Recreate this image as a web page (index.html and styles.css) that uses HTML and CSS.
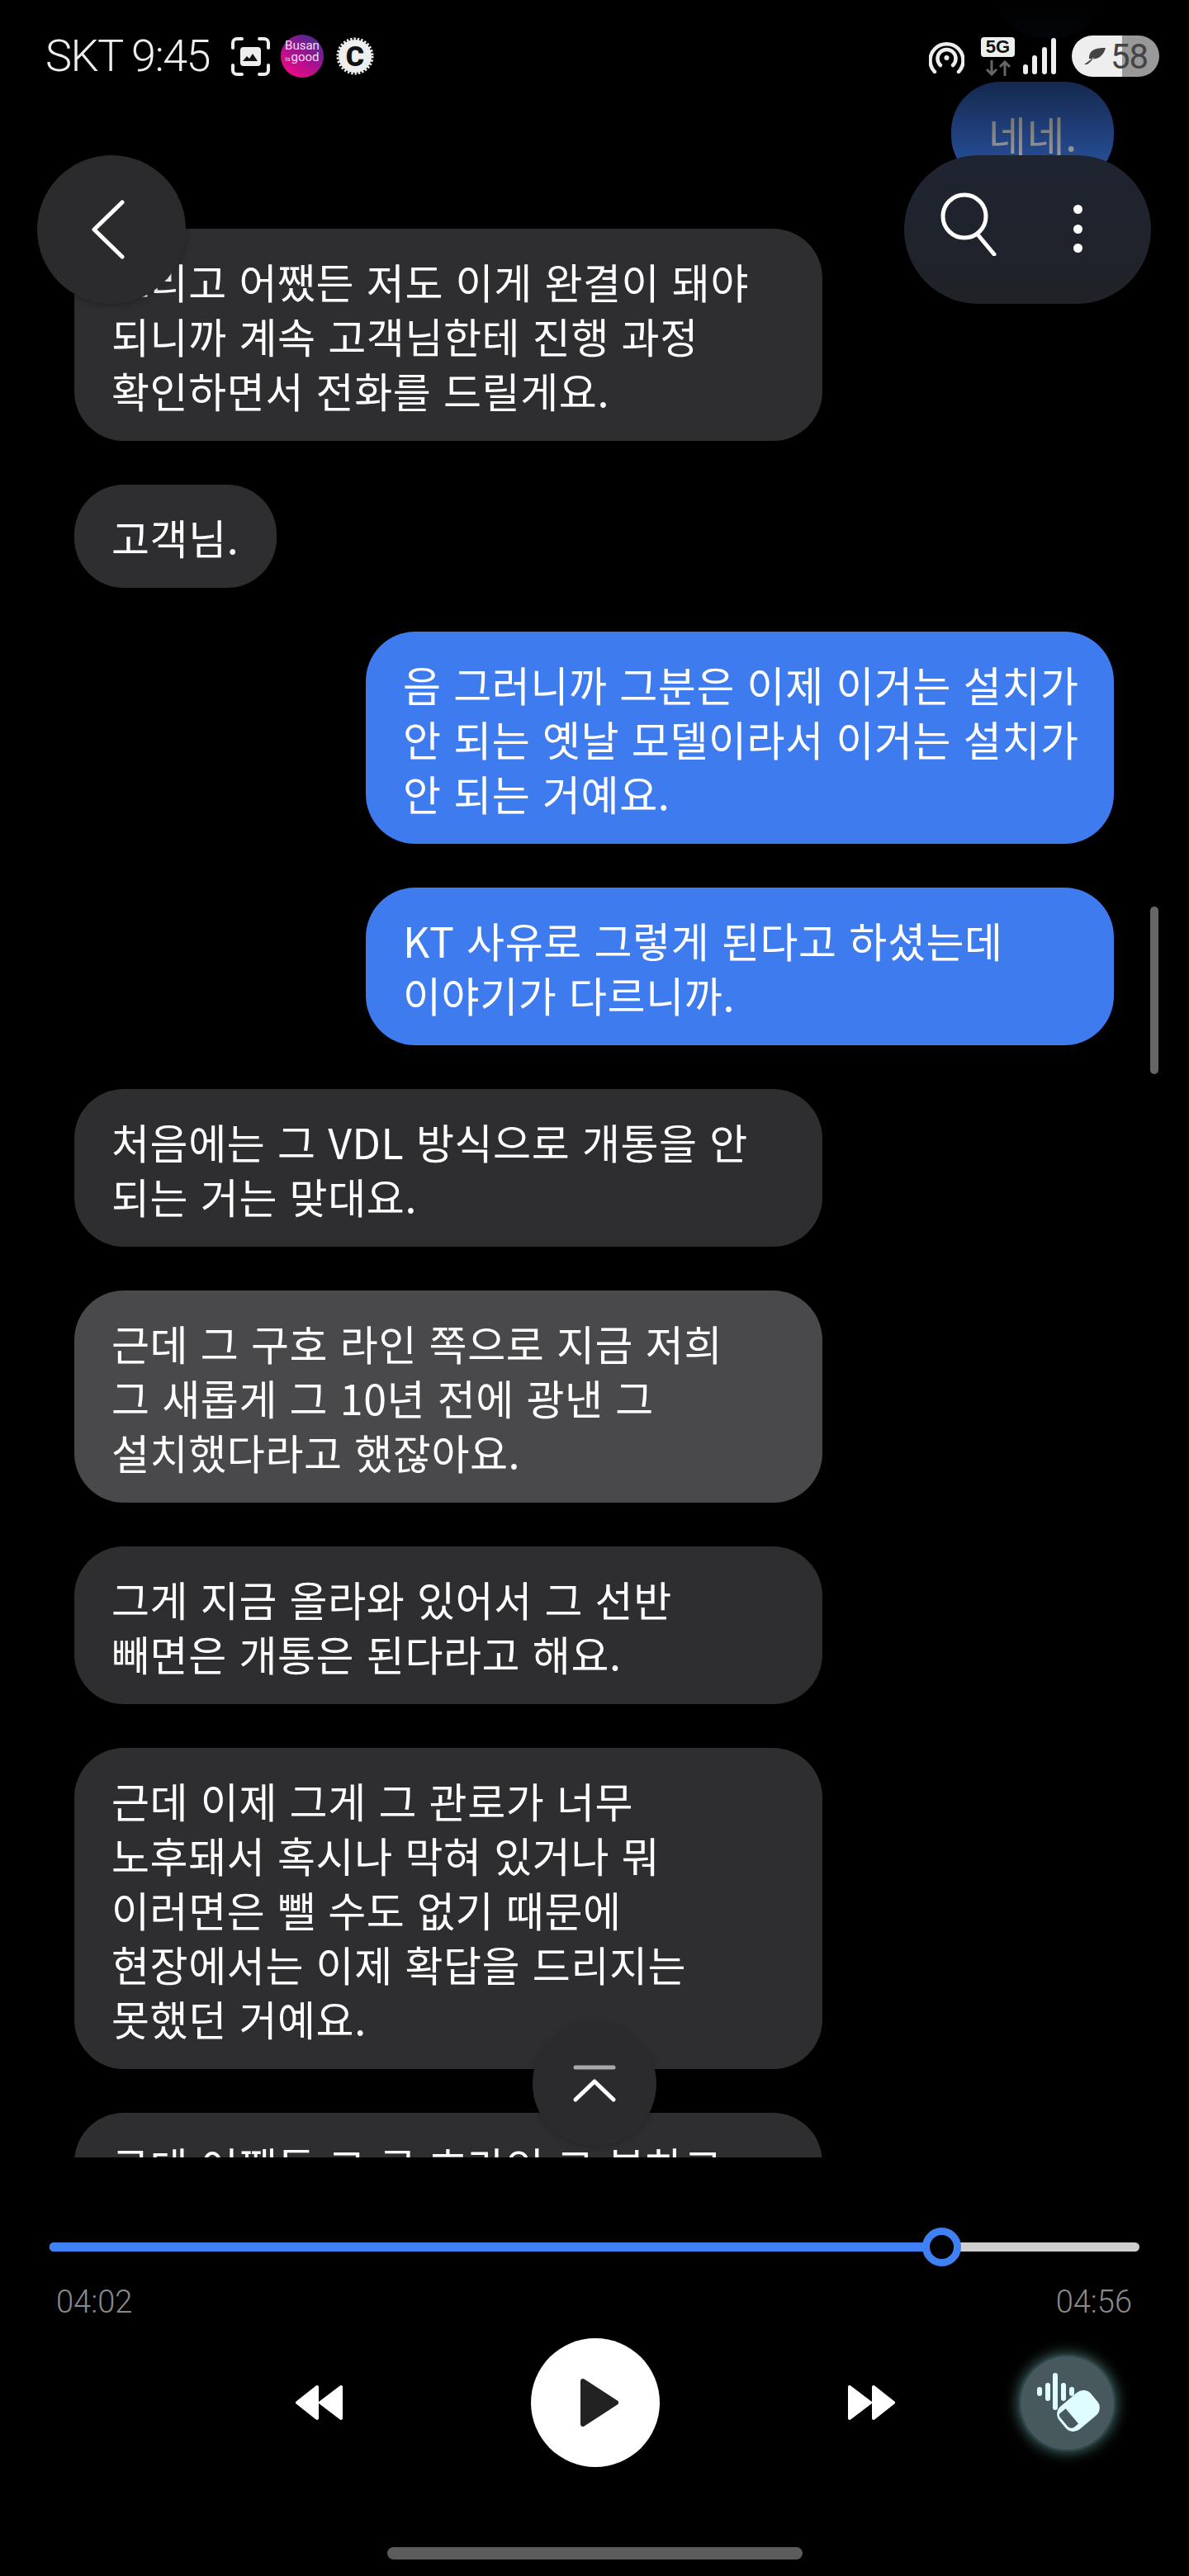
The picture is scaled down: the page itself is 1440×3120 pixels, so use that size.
FILE: index.html
```html
<!DOCTYPE html>
<html lang="ko">
<head>
  <meta charset="UTF-8" />
  <meta name="viewport" content="width=device-width, initial-scale=1.0" />
  <title>통화 녹음</title>
  <link rel="stylesheet" href="styles.css">
</head>
<body>
  <div class="page">
    <div class="chat">
      <div class="bubble sent bubble-off"></div>
      <div class="bubble sent short">네네.</div>
      <div class="bubble">그리고 어쨌든 저도 이게 완결이 돼야<br>되니까 계속 고객님한테 진행 과정<br>확인하면서 전화를 드릴게요.</div>
      <div class="bubble fit">고객님.</div>
      <div class="bubble sent">음 그러니까 그분은 이제 이거는 설치가<br>안 되는 옛날 모델이라서 이거는 설치가<br>안 되는 거예요.</div>
      <div class="bubble sent">KT 사유로 그렇게 된다고 하셨는데<br>이야기가 다르니까.</div>
      <div class="bubble">처음에는 그 VDL 방식으로 개통을 안<br>되는 거는 맞대요.</div>
      <div class="bubble active">근데 그 구호 라인 쪽으로 지금 저희<br>그 새롭게 그 10년 전에 광낸 그<br>설치했다라고 했잖아요.</div>
      <div class="bubble">그게 지금 올라와 있어서 그 선반<br>빼면은 개통은 된다라고 해요.</div>
      <div class="bubble">근데 이제 그게 그 관로가 너무<br>노후돼서 혹시나 막혀 있거나 뭐<br>이러면은 뺄 수도 없기 때문에<br>현장에서는 이제 확답을 드리지는<br>못했던 거예요.</div>
      <div class="bubble">근데 어쨌든 그 구 호라인 그 분하고</div>
    </div>

    <div class="top-fade"></div>
    <div class="scrollbar"></div>

    <div class="status">
      <div class="status-left">
        <span class="clock">SKT 9:45</span>
        <svg class="ico-shot" width="47" height="47" viewBox="0 0 47 47" fill="none">
          <path d="M2 13V7a5 5 0 0 1 5-5h6M34 2h6a5 5 0 0 1 5 5v6M45 34v6a5 5 0 0 1-5 5h-6M13 45H7a5 5 0 0 1-5-5v-6" stroke="#eee" stroke-width="4" stroke-linecap="round"/>
          <rect x="11" y="12" width="25" height="23" rx="4" fill="#eee"/>
          <path d="M14 29l5-6 3 3 4-6 6 9z" fill="#111"/>
        </svg>
        <div class="busan"><span>Busan</span><span><small>is</small>good</span></div>
        <svg class="ico-c" width="46" height="46" viewBox="0 0 46 46">
          <circle cx="23" cy="23" r="20" fill="#eee"/>
          <circle cx="23" cy="23" r="21" fill="none" stroke="#eee" stroke-width="3" stroke-dasharray="2.4 2"/>
          <text x="23" y="35" text-anchor="middle" class="c-letter">C</text>
        </svg>
      </div>
      <div class="status-right">
        <svg width="43" height="41" viewBox="0 0 43 41" fill="none" stroke="#eee" stroke-linecap="round">
          <path d="M7 39a20 20 0 1 1 29 0" stroke-width="4.5"/>
          <path d="M14 31a11 11 0 1 1 15 0" stroke-width="4.5"/>
          <circle cx="21.500" cy="22" r="3" fill="#eee" stroke="none"/>
        </svg>
        <div class="net">
          <span class="net-5g">5G</span>
          <svg width="30" height="19" viewBox="0 0 30 19" fill="none" stroke="#666" stroke-width="3">
            <path d="M7 0v17M1 11l6 6 6-6"/>
            <path d="M23 19V2M17 8l6-6 6 6"/>
          </svg>
        </div>
        <div class="signal">
          <i class="s1"></i><i class="s2"></i><i class="s3"></i><i class="s4"></i>
        </div>
        <div class="battery">
          <svg width="26" height="20" viewBox="0 0 26 20">
            <path d="M26 0C14 0 6 2 6 13c9 2 17-2 20-13zM0 20c3-2 8-6 12-9-3 5-6 8-10 10z" fill="#444"/>
          </svg>
          <span>58</span>
        </div>
      </div>
    </div>

    <button class="float-back">
      <svg width="46" height="76" viewBox="0 0 46 76" fill="none" stroke="#fff" stroke-width="5" stroke-linecap="round" stroke-linejoin="round">
        <path d="M38 5L4 38l34 33" />
      </svg>
    </button>

    <div class="float-tools">
      <svg width="70" height="78" viewBox="0 0 70 78" fill="none" stroke="#fff" stroke-width="5" stroke-linecap="round">
        <circle cx="30" cy="30" r="26"/>
        <path d="M46 52l20 24"/>
      </svg>
      <div class="dots"><i></i><i></i><i></i></div>
    </div>

    <button class="to-top">
      <svg width="52" height="46" viewBox="0 0 52 46" fill="none" stroke-width="5" stroke-linecap="round" stroke-linejoin="round">
        <path d="M3 3h46" stroke="#a9a9a9"/>
        <path d="M3 42l23-22 23 22" stroke="#fff"/>
      </svg>
    </button>

    <div class="player">
      <div class="track">
        <div class="track-fill" style="width:81.8%"></div>
        <div class="thumb" style="left:81.8%"></div>
      </div>
      <div class="times"><span>04:02</span><span>04:56</span></div>
      <div class="controls">
        <svg width="57" height="44" viewBox="0 0 57 44" fill="#fff" stroke="#fff" stroke-width="4" stroke-linejoin="round">
          <path d="M2 22L26 3v38zM30 22L55 3v38z"/>
        </svg>
        <button class="play">
          <svg width="46" height="58" viewBox="0 0 46 58" fill="#222" stroke="#222" stroke-width="6" stroke-linejoin="round">
            <path d="M3 3l40 26L3 55z"/>
          </svg>
        </button>
        <svg width="57" height="44" viewBox="0 0 57 44" fill="#fff" stroke="#fff" stroke-width="4" stroke-linejoin="round">
          <path d="M55 22L31 3v38zM27 22L2 3v38z"/>
        </svg>
        <button class="noise">
          <svg width="117" height="117" viewBox="0 0 117 117">
            <g fill="#dffcff">
              <rect x="22" y="39" width="6" height="11" rx="3"/>
              <rect x="32" y="34" width="6" height="22" rx="3"/>
              <rect x="41" y="22" width="6" height="45" rx="3"/>
              <rect x="51" y="34" width="6" height="22" rx="3"/>
              <rect x="61" y="39" width="6" height="11" rx="3"/>
              <g transform="rotate(-40 72 68)">
                <rect x="47" y="50" width="50" height="36" rx="12"/>
                <path d="M52 56h10v24H56a6 6 0 0 1-6-6V60a4 4 0 0 1 2-4z" fill="#47595d"/>
              </g>
            </g>
          </svg>
        </button>
      </div>
      <div class="home-bar"></div>
    </div>
  </div>
</body>
</html>
```

FILE: styles.css
```css
body {
  margin: 0;
  background: #000;
  font-family: "Noto Sans CJK KR", "Noto Sans", sans-serif;
  color: #fff;
}
button {
  border: 0;
  padding: 0;
  display: flex;
  align-items: center;
  justify-content: center;
}
.page {
  position: relative;
  width: 1440px;
  height: 3120px;
  overflow: hidden;
  background: #000;
}

/* chat list */
.chat {
  height: 2613px;
  overflow: hidden;
  padding: 0 91px 0 90px;
  display: flex;
  flex-direction: column;
  align-items: flex-start;
  gap: 53px;
}
.bubble {
  flex: none;
  box-sizing: border-box;
  width: 906px;
  padding: 29.5px 45px;
  border-radius: 60px;
  background: #2e2e30;
  font-size: 50px;
  line-height: 66px;
  letter-spacing: .6px;
  white-space: nowrap;
}
.bubble.fit {
  width: 245px;
}
.bubble.sent {
  align-self: flex-end;
  background: #3e7bef;
}
.bubble.short {
  width: 197px;
}
.bubble.bubble-off {
  width: 131px;
  height: 125px;
  margin-top: -79px;
  margin-right: 14px;
}
.bubble.active {
  background: #49494b;
}
.top-fade {
  position: absolute;
  top: 0;
  left: 0;
  right: 0;
  height: 270px;
  background: linear-gradient(to bottom, #000 0, rgba(0,0,0,.96) 46px, rgba(0,0,0,.67) 100px, rgba(0,0,0,.4) 190px, rgba(0,0,0,0) 270px);
}
.scrollbar {
  position: absolute;
  left: 1393px;
  top: 1098px;
  width: 10px;
  height: 203px;
  border-radius: 5px;
  background: #666;
}

/* status bar */
.status {
  position: absolute;
  top: 42px;
  left: 0;
  right: 0;
  height: 52px;
  padding: 0 36px 0 55px;
  display: flex;
  justify-content: space-between;
  align-items: center;
}
.status-left,
.status-right {
  display: flex;
  align-items: center;
}
.clock {
  width: 225px;
  font-family: Roboto, sans-serif;
  font-weight: 300;
  font-size: 54px;
  letter-spacing: -1.6px;
  line-height: 52px;
  color: #eee;
}
.busan {
  width: 52px;
  height: 52px;
  margin: 0 15px 0 13px;
  border-radius: 50%;
  background: linear-gradient(215deg, #4b2a90 10%, #b0108f 55%, #ee0a85 90%);
  display: flex;
  flex-direction: column;
  align-items: center;
  justify-content: center;
  padding-bottom: 10px;
  box-sizing: border-box;
  font-family: Roboto, sans-serif;
  font-size: 15px;
  line-height: 14px;
  color: #f4dcf5;
}
.busan small {
  font-size: 8px;
  margin-right: 1px;
}
.c-letter {
  font-family: Roboto, sans-serif;
  font-weight: 900;
  font-size: 34px;
  fill: #111;
}
.net {
  width: 41px;
  margin: 0 10px 0 20px;
  display: flex;
  flex-direction: column;
  align-items: center;
  gap: 4px;
}
.net-5g {
  width: 41px;
  height: 24px;
  border-radius: 4px;
  background: #eee;
  color: #111;
  font-family: "Liberation Sans", sans-serif;
  font-weight: 700;
  font-size: 22px;
  line-height: 24px;
  text-align: center;
}
.signal {
  width: 40px;
  height: 44px;
  margin-right: 19px;
  display: flex;
  align-items: flex-end;
  justify-content: space-between;
}
.signal i {
  width: 6px;
  border-radius: 3px;
  background: #eee;
}
.s1 { height: 12px; }
.s2 { height: 23px; }
.s3 { height: 33px; }
.s4 { height: 44px; }
.battery {
  box-sizing: border-box;
  width: 106px;
  height: 50px;
  padding-left: 15px;
  border-radius: 25px;
  background: linear-gradient(to right, #eee 57.5%, #999 57.5%);
  display: flex;
  align-items: center;
  gap: 6px;
  font-family: Roboto, sans-serif;
  font-size: 42px;
  letter-spacing: -1px;
  color: #444;
}

/* floating buttons */
.float-back {
  position: absolute;
  left: 45px;
  top: 188px;
  width: 180px;
  height: 180px;
  border-radius: 50%;
  background: #2b2b2d;
  box-shadow: 0 2px 8px rgba(0,0,0,.25);
  padding-right: 4px;
}
.float-tools {
  position: absolute;
  left: 1095px;
  top: 188px;
  width: 299px;
  height: 180px;
  box-sizing: border-box;
  border-radius: 90px;
  background: linear-gradient(to bottom, #1e2431, #202227);
  padding: 44px 0 0 43px;
  display: flex;
  gap: 92px;
}
.dots {
  padding-top: 16px;
  display: flex;
  flex-direction: column;
  gap: 12.500px;
}
.dots i {
  width: 11px;
  height: 11px;
  border-radius: 50%;
  background: #fff;
}
.to-top {
  position: absolute;
  left: 645px;
  top: 2449px;
  width: 150px;
  height: 150px;
  border-radius: 50%;
  background: #2b2b2d;
  box-shadow: 0 2px 8px rgba(0,0,0,.2);
}

/* player */
.player {
  padding-top: 103px;
}
.track {
  position: relative;
  height: 11px;
  margin: 0 60px;
  border-radius: 6px;
  background: #cfcfcf;
}
.track-fill {
  height: 11px;
  border-radius: 6px;
  background: #4080f5;
}
.thumb {
  position: absolute;
  top: -18px;
  width: 47px;
  height: 47px;
  box-sizing: border-box;
  margin-left: -23px;
  border: 9px solid #4080f5;
  border-radius: 50%;
  background: #000;
}
.times {
  margin-top: 41px;
  padding: 0 69px 0 68px;
  display: flex;
  justify-content: space-between;
  font-family: Roboto, sans-serif;
  font-weight: 300;
  font-size: 38px;
  line-height: 40px;
  color: #8a8a8a;
}
.controls {
  margin-top: 24px;
  padding-left: 358px;
  display: flex;
  align-items: center;
}
.play {
  width: 156px;
  height: 156px;
  margin: 0 228px;
  padding-left: 9px;
  border-radius: 50%;
  background: #fff;
}
.noise {
  width: 117px;
  height: 117px;
  margin-left: 150px;
  border-radius: 50%;
  background: #47595d;
  box-shadow: inset 0 0 0 2px #2b464b, 0 0 18px rgba(130,205,195,.6);
}
.home-bar {
  width: 503px;
  height: 15px;
  margin: 97px auto 0;
  border-radius: 8px;
  background: #5c5c5c;
}
```
